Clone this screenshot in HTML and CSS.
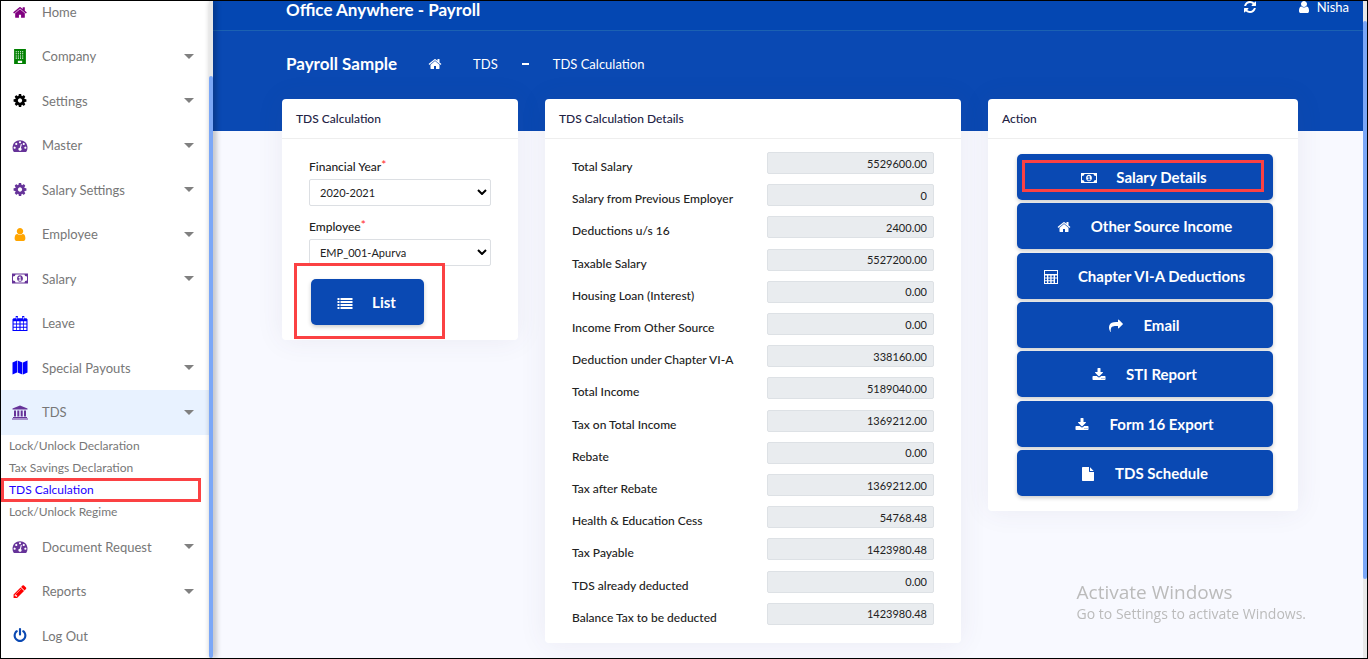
FILE: index.html
```html
<!DOCTYPE html>
<html lang="en">
<head>
<meta charset="utf-8">
<meta name="viewport" content="width=device-width, initial-scale=1">
<title>TDS Calculation</title>
<link rel="stylesheet" href="styles.css">
</head>
<body>
<svg class="sprite" aria-hidden="true">
<symbol id="home" viewBox="0 0 1792 1792"><path d="M1472 992v480q0 26-19 45t-45 19h-384v-384h-256v384h-384q-26 0-45-19t-19-45v-480q0-1 .5-3t.5-3l575-474 575 474q1 2 1 6zm223-69l-62 74q-8 9-21 11h-3q-13 0-21-7l-692-577-692 577q-12 8-24 7-13-2-21-11l-62-74q-8-10-7-23.5t11-21.5l719-599q32-26 76-26t76 26l244 204v-195q0-14 9-23t23-9h192q14 0 23 9t9 23v408l219 182q10 8 11 21.5t-7 23.5z"/></symbol>
<symbol id="cog" viewBox="0 0 1792 1792"><path d="M1152 896q0-106-75-181t-181-75-181 75-75 181 75 181 181 75 181-75 75-181zm512-109v222q0 12-8 23t-20 13l-185 28q-19 54-39 91 35 50 107 138 10 12 10 25t-9 23q-27 37-99 108t-94 71q-12 0-26-9l-138-108q-44 23-91 38-16 136-29 186-7 28-36 28h-222q-14 0-24.5-8.5t-11.5-21.5l-28-184q-49-16-90-37l-141 107q-10 9-25 9-14 0-25-11-126-114-165-168-7-10-7-23 0-12 8-23 15-21 51-66.5t54-70.5q-27-50-41-99l-183-27q-13-2-21-12.5t-8-23.5v-222q0-12 8-23t19-13l186-28q14-46 39-92-40-57-107-138-10-12-10-24 0-10 9-23 26-36 98.500-107.500t94.500-71.500q13 0 26 10l138 107q44-23 91-38 16-136 29-186 7-28 36-28h222q14 0 24.500 8.500t11.500 21.500l28 184q49 16 90 37l142-107q9-9 24-9 13 0 25 10 129 119 165 170 7 8 7 22 0 12-8 23-15 21-51 66.500t-54 70.500q26 50 41 98l183 28q13 2 21 12.500t8 23.500z"/></symbol>
<symbol id="user" viewBox="0 0 1792 1792"><path d="M1536 1399q0 109-62.500 187t-150.500 78h-854q-88 0-150.500-78t-62.500-187q0-85 8.500-160.500t31.500-152 58.500-131 94-89 134.500-34.500q131 128 313 128t313-128q76 0 134.500 34.500t94 89 58.500 131 31.500 152 8.500 160.500zm-256-887q0 159-112.500 271.500t-271.500 112.500-271.500-112.500-112.500-271.500 112.500-271.500 271.500-112.500 271.500 112.500 112.500 271.500z"/></symbol>
<symbol id="power" viewBox="0 0 1792 1792"><path d="M1664 896q0 156-61 298t-164 245-245 164-298 61-298-61-245-164-164-245-61-298q0-182 80.500-343t226.500-270q43-32 95.500-25t83.500 50q32 42 24.500 94.500t-49.500 84.500q-98 74-151.500 181t-53.500 228q0 104 40.500 198.500t109.500 163.500 163.500 109.500 198.500 40.500 198.500-40.500 163.500-109.500 109.500-163.500 40.500-198.500q0-121-53.500-228t-151.500-181q-42-32-49.500-84.500t24.500-94.500q31-43 84-50t95 25q146 109 226.500 270t80.500 343zm-640-768v640q0 52-38 90t-90 38-90-38-38-90v-640q0-52 38-90t90-38 90 38 38 90z"/></symbol>
<symbol id="share" viewBox="0 0 1792 1792"><path d="M1792 640q0 26-19 45l-512 512q-19 19-45 19t-45-19-19-45v-256h-224q-98 0-175.500 6t-154 21.500-133 42.500-105.500 69.500-80 101-48.500 138.500-17.500 181q0 55 5 123 0 6 2.500 23.500t2.500 26.500q0 15-8.500 25t-23.500 10q-16 0-28-17-7-9-13-22t-13.500-30-10.500-24q-127-285-127-451 0-199 53-333 162-403 875-403h224v-256q0-26 19-45t45-19 45 19l512 512q19 19 19 45z"/></symbol>
<symbol id="download" viewBox="0 0 1792 1792"><path d="M1344 1344q0-26-19-45t-45-19-45 19-19 45 19 45 45 19 45-19 19-45zm256 0q0-26-19-45t-45-19-45 19-19 45 19 45 45 19 45-19 19-45zm128-224v320q0 40-28 68t-68 28h-1472q-40 0-68-28t-28-68v-320q0-40 28-68t68-28h465l135 136q58 56 136 56t136-56l136-136h464q40 0 68 28t28 68zm-325-569q17 41-14 70l-448 448q-18 19-45 19t-45-19l-448-448q-31-29-14-70 17-39 59-39h256v-448q0-26 19-45t45-19h256q26 0 45 19t19 45v448h256q42 0 59 39z"/></symbol>
<symbol id="file" viewBox="0 0 1792 1792"><path d="M1152 512v-472q22 14 36 28l408 408q14 14 28 36h-472zm-128 32q0 40 28 68t68 28h544v1056q0 40-28 68t-68 28h-1344q-40 0-68-28t-28-68v-1600q0-40 28-68t68-28h800v544z"/></symbol>
<symbol id="pencil" viewBox="0 0 1792 1792"><path d="M491 1536l91-91-235-235-91 91v107h128v128h107zm523-928q0-22-22-22-10 0-17 7l-542 542q-7 7-7 17 0 22 22 22 10 0 17-7l542-542q7-7 7-17zm-54-192l416 416-832 832h-416v-416zm683 96q0 53-37 90l-166 166-416-416 166-165q36-38 90-38 53 0 91 38l235 234q37 39 37 91z"/></symbol>
<symbol id="refresh" viewBox="0 0 1792 1792"><path d="M1639 1056q0 5-1 7-64 268-268 434.500t-478 166.500q-146 0-282.500-55t-243.500-157l-129 129q-19 19-45 19t-45-19-19-45v-448q0-26 19-45t45-19h448q26 0 45 19t19 45-19 45l-137 137q71 66 161 102t187 36q134 0 250-65t186-179q11-17 53-117 8-23 30-23h192q13 0 22.500 9.500t9.500 22.500zm25-800v448q0 26-19 45t-45 19h-448q-26 0-45-19t-19-45 19-45l138-138q-148-137-349-137-134 0-250 65t-186 179q-11 17-53 117-8 23-30 23h-199q-13 0-22.500-9.500t-9.500-22.500v-7q65-268 270-434.500t480-166.500q146 0 284 55.500t245 156.500l130-129q19-19 45-19t45 19 19 45z"/></symbol>
<symbol id="gauge" viewBox="0 0 1792 1792"><path d="M384 1152q0-53-37.500-90.500t-90.500-37.500-90.500 37.500-37.500 90.500 37.500 90.500 90.500 37.500 90.500-37.500 37.500-90.500zm192-448q0-53-37.500-90.500t-90.500-37.500-90.500 37.500-37.500 90.500 37.500 90.500 90.500 37.500 90.500-37.500 37.500-90.500zm428 481l101-382q6-26-7.500-48.500t-38.500-29.500-48 6.500-30 39.500l-101 382q-60 5-107 43.500t-63 98.500q-20 77 20 146t117 89 146-20 89-117q16-60-6-117t-72-91zm660-33q0-53-37.500-90.500t-90.500-37.500-90.500 37.500-37.500 90.500 37.500 90.500 90.500 37.500 90.500-37.500 37.500-90.500zm-640-640q0-53-37.500-90.500t-90.500-37.500-90.500 37.500-37.500 90.500 37.500 90.500 90.500 37.500 90.500-37.500 37.500-90.500zm448 192q0-53-37.500-90.500t-90.500-37.500-90.500 37.500-37.500 90.500 37.500 90.500 90.500 37.500 90.500-37.500 37.500-90.500zm320 448q0 261-141 483-19 29-54 29h-1402q-35 0-54-29-141-221-141-483 0-182 71-348t191-286 286-191 348-71 348 71 286 191 191 286 71 348z"/></symbol>
<symbol id="building" viewBox="0 0 14 14"><path fill-rule="evenodd" d="M1.500 0h11v14h-11zM3 2v1h1V2zm2 0v1h1V2zm2 0v1h1V2zm2 0v1h1V2zM3 4v1h1V4zm2 0v1h1V4zm2 0v1h1V4zm2 0v1h1V4zM3 6v1h1V6zm2 0v1h1V6zm2 0v1h1V6zm2 0v1h1V6zM3 8v1h1V8zm2 0v1h1V8zm2 0v1h1V8zm2 0v1h1V8zM5 11v2h4v-2z"/></symbol>
<symbol id="money" viewBox="0 0 16 14"><path fill-rule="evenodd" d="M0 2h16v10H0zM3.500 3Q3.500 5 1 5v4q2.500 0 2.500 2h9q0-2 2.500-2V5q-2.500 0-2.500-2z"/><path fill-rule="evenodd" d="M8 3.800c1.900 0 2.900 1.500 2.900 3.200S9.900 10.200 8 10.200 5.100 8.700 5.100 7 6.100 3.800 8 3.800zM7.700 5 6.400 6.100l.5.600.6-.4v2H6.600v.9h2.800v-.9h-.8V5z"/></symbol>
<symbol id="calendar" viewBox="0 0 14 14"><path fill-rule="evenodd" d="M3 0h2v2h4V0h2v2h2l1 1v11H0V3l1-1h2zM1 5v2h2.300V5zm3 0v2h2.500V5zm3.500 0v2H10V5zm3.200 0v2H13V5zM1 8v2h2.300V8zm3 0v2h2.500V8zm3.500 0v2H10V8zm3.200 0v2H13V8zM1 11v2h2.300v-2zm3 0v2h2.500v-2zm3.500 0v2H10v-2zm3.200 0v2H13v-2zM3.700 1v2h.7V1zm6 0v2h.7V1z"/></symbol>
<symbol id="map" viewBox="0 0 16 14"><path d="M.5 2 5 0v12L.5 14zM5.600 0l4.800 2v12l-4.800-2zM11 2l4.500-2v12L11 14z"/></symbol>
<symbol id="bank" viewBox="0 0 16 14"><path d="m8 0 7.500 3v1H.5V3zM2 5h2v6H2zm3.300 0h2v6h-2zm3.400 0h2v6h-2zM12 5h2v6h-2zM1 11.500h14v1H1zM0 13h16v1H0z"/></symbol>
<symbol id="calc" viewBox="0 0 14 14"><path fill-rule="evenodd" d="M0 0h14v14H0zM1 1v3h12V1zm0 4.500v2h2v-2zm3.300 0v2h2v-2zm3.300 0v2h2v-2zm3.400 0v2h2v-2zM1 8.500v1.800h2V8.500zm3.300 0v1.800h2V8.500zm3.300 0v1.800h2V8.500zm3.400 0V13h2V8.500zM1 11.300V13h2v-1.700zm3.300 0V13h2v-1.700zm3.300 0V13h2v-1.700z"/></symbol>
<symbol id="list" viewBox="0 0 15 14"><path d="M0 2h2v2H0zm3 0h12v2H3zM0 5h2v2H0zm3 0h12v2H3zM0 8h2v2H0zm3 0h12v2H3zM0 11h2v2H0zm3 0h12v2H3z"/></symbol>
</svg>
<div class="app">
  <nav class="sidebar" aria-label="Main menu">
    <a class="item first" href="#"><svg class="icon purple"><use href="#home"/></svg><span>Home</span></a>
    <a class="item more" href="#"><svg class="icon green"><use href="#building"/></svg><span>Company</span></a>
    <a class="item more" href="#"><svg class="icon black"><use href="#cog"/></svg><span>Settings</span></a>
    <a class="item more" href="#"><svg class="icon violet"><use href="#gauge"/></svg><span>Master</span></a>
    <a class="item more" href="#"><svg class="icon violet"><use href="#cog"/></svg><span>Salary Settings</span></a>
    <a class="item more" href="#"><svg class="icon orange"><use href="#user"/></svg><span>Employee</span></a>
    <a class="item more" href="#"><svg class="icon violet"><use href="#money"/></svg><span>Salary</span></a>
    <a class="item" href="#"><svg class="icon blue"><use href="#calendar"/></svg><span>Leave</span></a>
    <a class="item more" href="#"><svg class="icon blue"><use href="#map"/></svg><span>Special Payouts</span></a>
    <a class="item more open" href="#"><svg class="icon violet"><use href="#bank"/></svg><span>TDS</span></a>
    <div class="submenu">
      <a href="#">Lock/Unlock Declaration</a>
      <a href="#">Tax Savings Declaration</a>
      <a class="current" href="#">TDS Calculation</a>
      <a href="#">Lock/Unlock Regime</a>
    </div>
    <a class="item more" href="#"><svg class="icon violet"><use href="#gauge"/></svg><span>Document Request</span></a>
    <a class="item more" href="#"><svg class="icon red"><use href="#pencil"/></svg><span>Reports</span></a>
    <a class="item" href="#"><svg class="icon navy"><use href="#power"/></svg><span>Log Out</span></a>
  </nav>
  <div class="scroll scroll-side"><div class="thumb"></div></div>
  <div class="main">
    <header class="topbar">
      <h1 class="title">Office Anywhere - Payroll</h1>
      <div class="tools">
        <button class="tool" type="button" aria-label="Refresh"><svg class="icon"><use href="#refresh"/></svg></button>
        <button class="tool" type="button"><svg class="icon"><use href="#user"/></svg>Nisha</button>
      </div>
    </header>
    <div class="crumbs">
      <h2 class="title">Payroll Sample</h2>
      <a class="crumb-home" href="#" aria-label="Home"><svg class="icon"><use href="#home"/></svg></a>
      <a class="crumb" href="#">TDS</a>
      <span class="dash"></span>
      <a class="crumb" href="#">TDS Calculation</a>
    </div>
    <main class="cards">
      <section class="card">
        <h3 class="card-title">TDS Calculation</h3>
        <form class="filter">
          <label class="label" for="year">Financial Year<sup>*</sup></label>
          <div class="select"><select id="year"><option>2020-2021</option></select><svg viewBox="0 0 10 6"><path d="m1 1 4 4 4-4"/></svg></div>
          <label class="label" for="emp">Employee<sup>*</sup></label>
          <div class="select"><select id="emp"><option>EMP_001-Apurva</option></select><svg viewBox="0 0 10 6"><path d="m1 1 4 4 4-4"/></svg></div>
          <button class="btn btn-list" type="button"><svg class="icon"><use href="#list"/></svg>List<i class="mark mark-list"></i></button>
        </form>
      </section>
      <section class="card">
        <h3 class="card-title">TDS Calculation Details</h3>
        <form class="details">
          <div class="row"><label for="f1">Total Salary</label><input id="f1" readonly value="5529600.00"></div>
          <div class="row"><label for="f2">Salary from Previous Employer</label><input id="f2" readonly value="0"></div>
          <div class="row"><label for="f3">Deductions u/s 16</label><input id="f3" readonly value="2400.00"></div>
          <div class="row"><label for="f4">Taxable Salary</label><input id="f4" readonly value="5527200.00"></div>
          <div class="row"><label for="f5">Housing Loan (Interest)</label><input id="f5" readonly value="0.00"></div>
          <div class="row"><label for="f6">Income From Other Source</label><input id="f6" readonly value="0.00"></div>
          <div class="row"><label for="f7">Deduction under Chapter VI-A</label><input id="f7" readonly value="338160.00"></div>
          <div class="row"><label for="f8">Total Income</label><input id="f8" readonly value="5189040.00"></div>
          <div class="row"><label for="f9">Tax on Total Income</label><input id="f9" readonly value="1369212.00"></div>
          <div class="row"><label for="f10">Rebate</label><input id="f10" readonly value="0.00"></div>
          <div class="row"><label for="f11">Tax after Rebate</label><input id="f11" readonly value="1369212.00"></div>
          <div class="row"><label for="f12">Health &amp; Education Cess</label><input id="f12" readonly value="54768.48"></div>
          <div class="row"><label for="f13">Tax Payable</label><input id="f13" readonly value="1423980.48"></div>
          <div class="row"><label for="f14">TDS already deducted</label><input id="f14" readonly value="0.00"></div>
          <div class="row"><label for="f15">Balance Tax to be deducted</label><input id="f15" readonly value="1423980.48"></div>
        </form>
      </section>
      <section class="card">
        <h3 class="card-title">Action</h3>
        <div class="actions">
          <button class="btn" type="button"><svg class="icon"><use href="#money"/></svg>Salary Details<i class="mark mark-salary"></i></button>
          <button class="btn" type="button"><svg class="icon"><use href="#home"/></svg>Other Source Income</button>
          <button class="btn" type="button"><svg class="icon"><use href="#calc"/></svg>Chapter VI-A Deductions</button>
          <button class="btn" type="button"><svg class="icon"><use href="#share"/></svg>Email</button>
          <button class="btn" type="button"><svg class="icon"><use href="#download"/></svg>STI Report</button>
          <button class="btn" type="button"><svg class="icon"><use href="#download"/></svg>Form 16 Export</button>
          <button class="btn" type="button"><svg class="icon"><use href="#file"/></svg>TDS Schedule</button>
        </div>
      </section>
    </main>
    <div class="watermark">
      <p class="watermark-title">Activate Windows</p>
      <p class="watermark-text">Go to Settings to activate Windows.</p>
    </div>
  </div>
  <div class="scroll scroll-page"><div class="thumb"></div></div>
</div>
</body>
</html>
```
FILE: styles.css
```css
* { box-sizing: border-box; }
body, h1, h2, h3, p { margin: 0; }
body { font-family: Lato, "Open Sans", sans-serif; font-size: 13px; color: #222; }
a { color: inherit; text-decoration: none; }
button, input, select { font: inherit; color: inherit; }
.sprite { position: absolute; width: 0; height: 0; }
.icon { width: 16px; height: 14px; fill: currentColor; flex: none; }

.app { display: flex; height: 100vh; border: 1px solid #000; background: #f8f9ff; overflow: hidden; }

/* Sidebar */
.sidebar { display: flex; flex-direction: column; flex: none; width: 208px; background: #fff; color: #777; overflow: hidden; }
.item { display: flex; align-items: center; flex: 1 1 0; min-height: 44px; padding: 0 15px 0 11px; }
.item .icon { height: 15px; margin-right: 14px; }
.item.first { flex: none; height: 44px; margin-top: -11px; }
.item span { flex: 1; }
.item.more::after { content: ""; border: 5px solid transparent; border-top-color: #808080; border-bottom: 0; }
.item.open { background: #e8f2ff; }
.submenu { display: flex; flex-direction: column; flex: none; padding: 0 8px 2px; font-size: 12px; }
.submenu a { position: relative; line-height: 22px; }
.submenu .current { color: #20f; }
.submenu .current::after { content: ""; position: absolute; inset: -1px 0 -1px -8px; border: 3px solid #fb4143; }
.purple { color: #800080; }
.green { color: #008000; }
.black { color: #000; }
.violet { color: #639; }
.orange { color: #ffa500; }
.blue { color: #00f; }
.red { color: #f00; }
.navy { color: #0a49b3; }

.scroll { flex: none; width: 4px; background: #e8e8e8; }
.thumb { height: 100%; background: #7ba7f7; border-radius: 2px; }
.scroll-side { position: relative; padding-top: 75px; box-shadow: 2px 0 6px rgba(0, 0, 0, .4); }
.scroll-page { padding: 20px 0 79px; }

/* Header */
.main { flex: 1; min-width: 0; background: linear-gradient(#0a49b3, #0a49b3) 0 0 / 100% 130px no-repeat; }
.topbar { display: flex; align-items: flex-start; justify-content: space-between; height: 30px; padding: 0 14px 0 73px; border-bottom: 1px solid #1c61b2; background: #0447b2; color: #fff; }
.title { font-size: 17px; line-height: 18px; font-weight: 700; }
.tools { display: flex; gap: 40px; }
.tool { display: flex; align-items: center; gap: 6px; height: 12px; padding: 0; border: 0; background: none; line-height: 12px; }
.tool .icon { width: 14px; height: 14px; }
.crumbs { display: flex; align-items: center; height: 66px; padding: 0 14px 0 73px; color: #fff; }
.crumb-home { display: flex; margin: 0 31px; }
.crumb-home .icon { width: 14px; }
.dash { width: 7px; height: 2px; margin: 0 24px; background: #fff; }

/* Cards */
.cards { display: grid; grid-template-columns: 236fr 416fr 310fr; align-items: start; gap: 27px; padding: 2px 65px 0 69px; }
.card { min-width: 0; background: #fff; border-radius: 4px; box-shadow: 0 0 28px rgba(82, 63, 105, .08); }
.card-title { padding: 0 14px; border-bottom: 1px solid #eee; font-size: 12px; line-height: 39px; font-weight: 500; color: #224; }
.filter { padding: 20px 27px 15px; }
.label { display: block; height: 20px; line-height: 16px; font-size: 12px; font-weight: 500; }
.label sup { color: #f33; font-size: 12px; line-height: 0; vertical-align: 2px; }
.select { position: relative; margin-bottom: 13px; }
.select select { display: block; width: 100%; height: 27px; padding: 0 10px; border: 1px solid #dcdfe3; border-radius: 2px; background: #fff; font-size: 11px; appearance: none; }
.select svg { position: absolute; right: 4px; top: 10px; width: 10px; height: 6px; fill: none; stroke: #000; stroke-width: 2; pointer-events: none; }
.details { display: flex; flex-direction: column; justify-content: space-between; min-height: 504px; padding: 13px 27px 18px; font-size: 12px; }
.row { display: grid; grid-template-columns: 195fr 167fr; }
.row label { padding-top: 8px; line-height: 14px; height: 22px; white-space: nowrap; font-weight: 500; }
.row input { width: 100%; height: 22px; padding: 0 6px; border: 1px solid #dde1e5; border-radius: 2px; background: #e9ecef; text-align: right; font-size: 11px; }
.actions { display: flex; flex-direction: column; justify-content: space-between; min-height: 372px; padding: 15px 25px 15px 29px; }
.btn { position: relative; display: flex; align-items: center; justify-content: center; gap: 19px; height: 46px; padding: 0 12px 0 10px; border: 0; border-radius: 5px; background: #0a49b3; box-shadow: 0 2px 4px rgba(0, 0, 0, .2); color: #fff; font-size: 15px; font-weight: 700; }
.btn .icon { margin-top: 2px; }
.btn-list { width: 113px; margin-left: 2px; margin-top: 11px; }
.mark { position: absolute; border: 3px solid #fb4143; }
.mark-list { inset: -16px -21px -14px -17px; }
.mark-salary { inset: 6px 9px 8px 5px; }

.watermark { position: fixed; right: 62px; bottom: 35px; color: #bbb; font-family: "Open Sans", "Noto Sans", sans-serif; }
.watermark-title { font-size: 19px; line-height: 24px; }
.watermark-text { font-size: 14px; line-height: 20px; }
```
